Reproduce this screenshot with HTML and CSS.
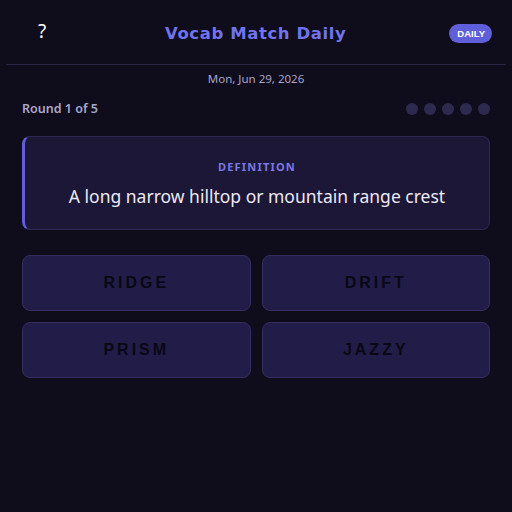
FILE: index.html
```html
<!DOCTYPE html>
<html lang="en">
<head>
<meta charset="utf-8">
<title>Vocab Match Daily</title>
<link rel="stylesheet" href="styles.css">
</head>
<body>
<div class="app">
  <header class="topbar">
    <button class="help" type="button">?</button>
    <h1 class="title">Vocab Match Daily</h1>
    <span class="badge">DAILY</span>
  </header>
  <main class="content">
    <p class="date">Mon, Jun 29, 2026</p>
    <div class="progress">
      <span class="round">Round 1 of 5</span>
      <div class="dots">
        <span class="dot"></span><span class="dot"></span><span class="dot"></span><span class="dot"></span><span class="dot"></span>
      </div>
    </div>
    <section class="definition">
      <div class="def-label">DEFINITION</div>
      <div class="def-text">A long narrow hilltop or mountain range crest</div>
    </section>
    <div class="choices">
      <button class="choice" type="button">RIDGE</button>
      <button class="choice" type="button">DRIFT</button>
      <button class="choice" type="button">PRISM</button>
      <button class="choice" type="button">JAZZY</button>
    </div>
  </main>
</div>
</body>
</html>
```
FILE: styles.css
```css
* { box-sizing: border-box; }

html, body {
  margin: 0;
  height: 100%;
  background: #0f0c1c;
}

body {
  font-family: "Noto Sans", "Open Sans", sans-serif;
  color: #e6e4f2;
}

.app {
  padding: 0 6px;
}

.topbar {
  height: 65px;
  display: flex;
  align-items: center;
  justify-content: space-between;
  padding: 2px 14px 0 20px;
  border-bottom: 1px solid #2a2545;
}

.help {
  width: 32px;
  height: 32px;
  background: none;
  border: none;
  color: #ffffff;
  font-family: "Noto Sans", sans-serif;
  font-size: 19px;
  padding: 0;
  margin-top: -4px;
}

.title {
  margin: 0 0 0 4px;
  font-family: "DejaVu Sans", Verdana, sans-serif;
  font-weight: bold;
  font-size: 16.5px;
  letter-spacing: 0.6px;
  color: #7073ec;
}

.badge {
  background: #5f5fd9;
  color: #ffffff;
  font-family: "Liberation Sans", Arial, sans-serif;
  font-weight: bold;
  font-size: 9.5px;
  line-height: 11px;
  padding: 4px 7px 4px 8px;
  border-radius: 10px;
}

.content {
  padding: 0 16px;
}

.date {
  margin: 6px 0 0;
  text-align: center;
  font-size: 11.5px;
  color: #a8a6c8;
}

.progress {
  display: flex;
  justify-content: space-between;
  align-items: center;
  margin-top: 14px;
}

.round {
  font-size: 12.5px;
  font-weight: 600;
  color: #a9a7c9;
}

.dots {
  display: flex;
  gap: 6px;
}

.dot {
  width: 12px;
  height: 12px;
  border-radius: 50%;
  background: #2e2a4f;
}

.definition {
  margin-top: 19px;
  height: 94px;
  background: #1c1736;
  border: 1px solid #2d2850;
  border-left: 3px solid #5f5fd9;
  border-radius: 8px;
  display: flex;
  flex-direction: column;
  align-items: center;
  justify-content: center;
  gap: 10px;
}

.def-label {
  font-size: 11px;
  font-weight: 700;
  letter-spacing: 1.2px;
  color: #7a78e4;
}

.def-text {
  font-size: 17.5px;
  color: #ece9f4;
}

.choices {
  margin-top: 25px;
  display: grid;
  grid-template-columns: 1fr 1fr;
  gap: 11px 11px;
}

.choice {
  height: 56px;
  background: #221c48;
  border: 1px solid #342d5e;
  border-radius: 8px;
  font-family: "Liberation Sans", Arial, sans-serif;
  font-weight: bold;
  font-size: 16px;
  letter-spacing: 3px;
  color: #0a0814;
}
```
